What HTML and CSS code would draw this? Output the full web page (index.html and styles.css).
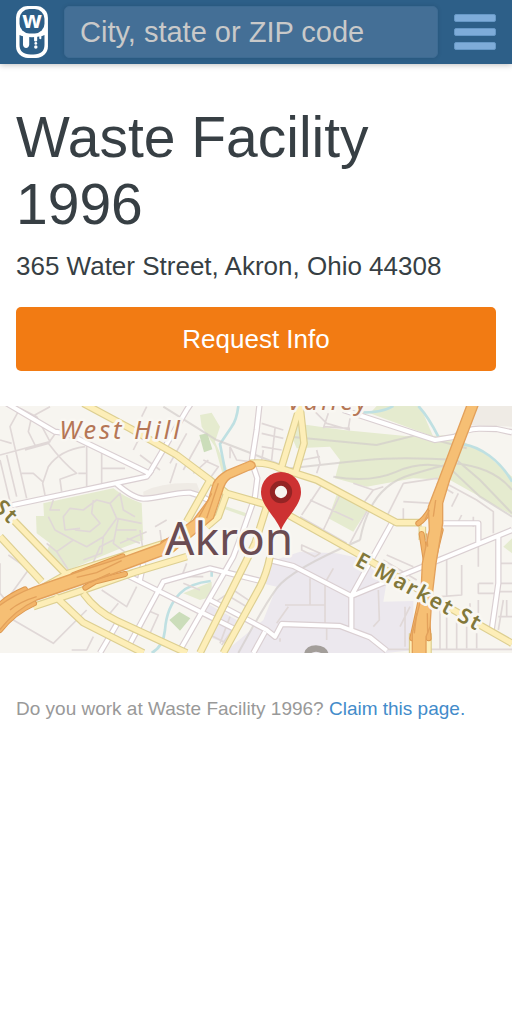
FILE: index.html
```html
<!DOCTYPE html>
<html lang="en">
<head>
<meta charset="utf-8">
<meta name="viewport" content="width=device-width, initial-scale=1">
<title>Waste Facility 1996</title>
<link rel="stylesheet" href="styles.css">
</head>
<body>
<header class="topbar">
  <a class="logo" href="#" aria-label="Home">
    <svg viewBox="0 0 92 150" aria-hidden="true">
      <rect width="92" height="150" rx="34" fill="#fff"/>
      <rect x="10" y="9" width="72" height="70" rx="28" fill="#2d5f88"/>
      <text class="logo-letter" x="46" y="62" text-anchor="middle">w</text>
      <path d="M10 84Q22 90 46 90T82 84V112Q82 140 50 140H42Q10 140 10 112z" fill="#2d5f88"/>
      <path d="M20 84H38V112Q37 121 29 121T20 112zM52 84H61V100Q56 105 52 100zM67 84H73V94Q70 98 67 94z" fill="#fff"/>
      <circle cx="57" cy="108" r="4" fill="#fff"/><circle cx="57" cy="118" r="5" fill="#fff"/>
    </svg>
  </a>
  <input class="search" type="search" placeholder="City, state or ZIP code" aria-label="City, state or ZIP code">
  <button class="menu" type="button" aria-label="Menu"><span class="bar"></span><span class="bar"></span><span class="bar"></span></button>
</header>
<main>
  <section class="intro">
    <h1 class="title">Waste Facility 1996</h1>
    <p class="address">365 Water Street, Akron, Ohio 44308</p>
    <button class="request" type="button">Request Info</button>
  </section>
  <svg class="map" viewBox="0 18 1536 741" role="img" aria-label="Map of Akron">
    <defs>
      <g id="white">
        <path d="M20 10L165 95L200 100L448 220L560 30L580 0M0 322L40 315L345 250L440 230L455 210M350 252Q400 295 430 296C480 296 520 276 570 278Q600 285 625 300M780 0L770 90L755 185L772 235L765 290L730 390L700 470L535 759M1030 30L1305 120L1365 110Q1400 85 1440 86L1490 87L1536 97"/>
        <path d="M380 525L470 570L610 640L700 685M300 759L355 665M385 740L490 545L630 505L790 545M630 600L800 690L825 710L845 672L1020 678L1110 712L1160 752M795 695L760 759M800 478L880 498L1054 588V688M1054 588L1175 370M1054 588L1536 390M1330 370H1435V430M1495 410V550L1475 690M430 490L420 540"/>
      </g>
      <g id="yellow">
        <path d="M250 10L390 85L530 165L630 240L560 365M630 240L680 280L820 320L1080 465L1360 630L1536 730M750 190Q800 185 840 205L950 240L1190 368H1265M845 200L900 18L912 130L888 212M680 280L655 350L620 380M800 320L765 430L600 759M810 470Q800 520 780 560L670 759M0 410L125 545M40 360L200 525M80 590L205 520L380 465L540 415M100 620L250 570L400 518L560 470M165 588L250 668L430 759M250 580Q290 635 350 662L560 759M1267 380V420M1238 700V759M1284 700V759"/>
      </g>
      <g id="ramps">
        <path d="M0 615Q25 590 75 568M0 690Q40 638 102 610M220 525L368 469M256 563L285 545L375 522M490 430L545 405M1255 370Q1285 350 1310 290M1265 402L1280 500M1322 390L1295 500M1237 715L1260 610M1286 715L1278 610"/>
      </g>
      <path id="market" d="M1062 494L1470 715"/>
    </defs>
    <rect y="18" width="1536" height="741" fill="#f7f5f0"/>
    <g class="park">
      <path d="M130 310L340 265Q370 290 425 310L430 420L350 450L205 510L140 455L150 430L110 400L108 348H132z"/>
      <path d="M600 45L635 38L660 80L645 125L680 205L670 230L645 140L605 80zM885 70L1030 90L1240 110L1350 105L1450 155L1536 230V345L1440 290L1350 240L1240 235L1100 260L1005 235L1020 180L990 140L890 145L875 110zM1110 40L1130 18H1260L1300 110z"/>
      <path d="M1010 285L1105 325L1060 395L985 355zM550 580L635 545V590L600 600zM675 318L740 340L738 350L675 328zM1510 440L1536 415V460z"/>
    </g>
    <path class="grove" d="M598 105L622 100L637 148L612 157zM508 660L538 635L571 655L540 692z"/>
    <path d="M430 275Q490 245 590 250L600 275L500 280L430 290zM1435 18H1536V80L1400 75z" fill="#efebe5"/>
    <path class="campus" d="M810 485L900 455L1010 460L1080 475L1160 545L1150 605L1240 603V750L1160 759H670L790 660L830 560L785 550zM620 610L720 665L690 735L625 710L650 660L610 635z"/>
    <g class="water">
      <path d="M715 18Q710 60 695 80L660 132L675 210L668 240M1080 38Q1150 38 1180 18M1255 18Q1285 50 1315 110M1390 133C1440 140 1500 180 1536 245M635 510V530M632 543Q570 550 540 580Q500 620 495 690Q490 740 455 759"/>
    </g>
    <g class="rail">
      <path d="M870 110L1130 135L1250 105L1400 145M870 205Q1000 190 1100 180T1370 180L1440 240L1536 340M1000 230Q1110 250 1190 215T1350 205L1440 290L1536 350M715 759Q790 620 830 565T1080 420M1080 420Q1110 260 1230 225T1360 190Q1480 200 1536 270M490 20L650 120L870 205"/>
    </g>
    <g class="minor">
      <path d="M60 25L30 80L80 295M60 25L110 50L150 125L0 165M150 20L95 50L85 95L105 135M170 95L145 130L75 150M145 130Q190 190 230 220L180 238L185 275M255 140Q180 150 145 200L128 250L135 285M260 130V260M305 150V250M305 205H375M65 220H100L128 245M0 180L30 305M20 165L50 290M235 220H260M0 120L35 130M440 20L425 50M400 150L425 100M420 165L480 210M510 250L530 190"/>
      <path d="M560 100L510 190M600 120L550 210M625 180L580 220M610 180L655 200L630 235M690 140L710 180L750 185M690 140L690 175M785 70L850 90M785 100L850 115M785 140L845 150M790 150L785 180M825 85L815 180M930 20L980 70L1050 90M985 40L970 85M1050 55L1045 85M950 150L960 190L950 220M905 180L960 170M970 80L1050 85"/>
      <path d="M965 255L905 345M1020 285L970 390M1105 325L1050 430M930 300L1060 360M900 350L1040 430M1060 250L1120 270L1090 310M1120 270L1150 260M1210 250L1310 235L1430 300L1480 335V400M1310 250L1360 280M1375 280L1355 320M1210 250L1160 350M1210 305L1300 310M1210 325V365M1385 345L1370 375M1420 350V380"/>
      <path d="M0 490V580L50 640M20 600L85 510M40 660L160 730L260 630M215 750H260L280 710M305 570L380 620L410 560M355 610L330 640M90 510L25 465M270 510L300 440L340 420M360 430L440 395M435 490L420 390M480 390L485 430M465 380L500 360M420 430L380 415M440 630L475 645L450 700L410 690M550 550L600 570M640 610L700 570L760 610M690 590L740 620M690 650L660 730M715 665L665 735M560 490L545 530L610 530M620 700L680 730"/>
      <path d="M975 540V670M930 535V615H855M865 615H975M865 620L830 670M905 435L960 460L945 470L905 450zM1000 505L980 540M1135 570L1138 660L1120 680M980 670V720M840 715V725M1215 620V740M1230 620L1200 680M1150 480L1250 540M1160 465L1240 500M1340 480V590M1385 495V585L1320 590M1435 420V500M1435 550V580H1495M1436 550H1480M1435 600V680M1495 490H1536M1495 550H1536M1495 575H1536M1495 650H1536M1510 600L1495 690M1320 630V750M1370 660V750M1400 680V745M1430 700V745M1150 748H1536M1520 600V650M1410 610V680M1340 650V750"/>
      <path d="M205 510L170 455L220 420L165 390L145 350M220 420L260 440L310 410L305 460L250 480M310 410L350 355L330 310L290 300L250 330L210 325L190 350L195 390L240 385M280 300L275 340L300 370L270 395L225 390M350 355L425 370M330 310L360 280L370 330L405 350M350 390L410 390M355 355L340 430L380 460M160 300L150 330L180 330M170 455L140 430"/>
    </g>
    <use href="#white" class="road white-case"/>
    <use href="#white" class="road white-fill"/>
    <use href="#yellow" class="road yellow-case"/>
    <use href="#yellow" class="road yellow-fill"/>
    <use href="#ramps" class="road ramp-case"/>
    <use href="#ramps" class="road ramp-fill"/>
    <g class="highway">
      <path d="M1402 12H1436L1349 240L1328 310V370L1308 490L1295 600L1290 680L1278 710V765H1237V700L1262 600L1267 490L1288 390L1285 320L1316 240z"/>
      <path d="M750 183Q765 185 766 198Q762 208 748 210L690 235Q674 245 665 280L640 355L520 455L330 525L110 600Q40 632 -9 700V622Q40 585 100 562L250 510L360 475L480 432L580 360L625 300L640 250Q650 230 680 212z"/>
    </g>
    <path class="lane" d="M655 250L620 355M635 280L590 365M365 482L290 518L230 532M330 520L270 548M30 630Q60 605 110 590M1307 300L1300 350M1288 330L1275 360M1280 400L1283 440M1250 640L1243 700M1282 640L1283 700"/>
    <path d="M912 764Q915 737 948 736Q983 739 986 764H968Q963 756 948 755Q935 756 928 764z" fill="#a39e9a"/>
    <g class="label">
      <text class="district" x="178" y="118">West Hill</text>
      <text class="district" x="862" y="31">Valley</text>
      <text class="street" transform="translate(-22 327) rotate(43)">St</text>
      <text class="street"><textPath href="#market">E Market St</textPath></text>
      <text class="city" x="495" y="465">Akron</text>
    </g>
    <path d="M843 391C828 350 783 318 783 276A60 60 0 0 1 903 276C903 318 858 350 843 391z" fill="#cd3232"/>
    <circle cx="843" cy="276" r="26" fill="#f7f5f0" stroke="#942424" stroke-width="15"/>
  </svg>
  <p class="claim">Do you work at Waste Facility 1996? <a class="claim-link" href="#">Claim this page.</a></p>
</main>
</body>
</html>
```
FILE: styles.css
```css
* { box-sizing: border-box; }
body {
  margin: 0;
  background: #fff;
  color: #373f44;
  font-family: "Liberation Sans", Arial, sans-serif;
}
.topbar {
  display: flex;
  align-items: center;
  gap: 16px;
  padding: 6px 16px;
  background: #2d5f88;
  box-shadow: 0 1px 6px rgba(0, 0, 0, .25);
}
.logo { display: block; }
.logo svg { display: block; width: 32px; height: 52px; }
.logo-letter { font: 700 66px "Noto Sans", sans-serif; fill: #fff; }
.search {
  flex: 1;
  min-width: 0;
  height: 52px;
  padding: 0 15px;
  border: 1px solid #3d6b93;
  border-radius: 5px;
  background: #446f96;
  box-shadow: 0 0 4px rgba(0, 0, 0, .12);
  color: #fff;
  font: 29px "Liberation Sans", Arial, sans-serif;
  appearance: none;
}
.search::placeholder { color: #c9c9c9; opacity: 1; }
.menu {
  display: flex;
  flex-direction: column;
  gap: 6px;
  width: 42px;
  padding: 0;
  border: 0;
  background: none;
}
.bar {
  height: 8px;
  border: 1px solid #6698c6;
  border-radius: 2px;
  background: #7eacd9;
}
.intro { padding: 40px 16px 35px; }
.title {
  margin: 0 0 10px;
  font-size: 57px;
  font-weight: 400;
  line-height: 67px;
}
.address {
  margin: 0 0 23px;
  font-size: 26px;
  line-height: 36px;
}
.request {
  display: block;
  width: 100%;
  height: 64px;
  border: 0;
  border-radius: 5px;
  background: #f27b13;
  color: #fff;
  font: 26px "Liberation Sans", Arial, sans-serif;
}
.map { display: block; width: 100%; }
.claim {
  margin: 0;
  padding: 42px 16px;
  color: #999;
  font-size: 19px;
  line-height: 28px;
}
.claim-link { color: #428bca; text-decoration: none; }

.park { fill: #e5ebcf; }
.grove { fill: #cbddba; }
.campus { fill: #ece8ee; }
.water { fill: none; stroke: #bfe0e2; stroke-width: 8; }
.rail { fill: none; stroke: #d3cdca; stroke-width: 6; opacity: .7; }
.minor { fill: none; stroke: #e0d8d7; stroke-width: 5; stroke-linejoin: round; }
.road { fill: none; stroke-linejoin: round; }
.white-case { stroke: #dacfd2; stroke-width: 19; }
.white-fill { stroke: #fff; stroke-width: 12; }
.yellow-case { stroke: #ddcf91; stroke-width: 23; }
.yellow-fill { stroke: #fdeeb8; stroke-width: 16; }
.ramp-case { stroke: #dd9850; stroke-width: 18; stroke-linecap: round; }
.ramp-fill { stroke: #f2b469; stroke-width: 12; stroke-linecap: round; }
.highway { fill: #f6bf74; stroke: #e3a15b; stroke-width: 4; stroke-linejoin: round; }
.lane { fill: none; stroke: #e3a15b; stroke-width: 4; }
.label {
  paint-order: stroke;
  stroke: #f9f7f2;
  stroke-width: 16;
  stroke-linejoin: round;
  font-family: "Noto Sans", "Open Sans", sans-serif;
}
.district { fill: #b57656; font-size: 76px; font-style: italic; letter-spacing: 9px; }
.street { fill: #82783a; font-size: 64px; font-weight: 600; letter-spacing: 6px; }
.city { fill: #6b4c52; font-size: 138px; }
```
